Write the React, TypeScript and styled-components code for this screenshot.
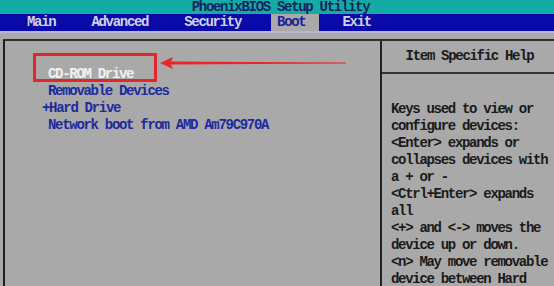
import styled, { createGlobalStyle } from "styled-components";

const GlobalStyle = createGlobalStyle`
  *, *::before, *::after {
    box-sizing: border-box;
  }
  html, body {
    margin: 0;
    padding: 0;
    overflow: hidden;
    background: #a9a9a9;
  }
  body {
    font-family: "Liberation Mono", "DejaVu Sans Mono", monospace;
    font-size: 14px;
    font-weight: 700;
    letter-spacing: -1.3px;
  }
`;

const Screen = styled.div`
  position: relative;
  width: 554px;
  height: 286px;
  overflow: hidden;
  background: #a9a9a9;
  display: flex;
  flex-direction: column;
`;

const TitleBar = styled.div`
  height: 14px;
  line-height: 14px;
  background: #14aba6;
  color: #14235e;
  text-align: center;
  padding-left: 7px;
  white-space: pre;
`;

const MenuBar = styled.div`
  display: flex;
  height: 19px;
  background: #0a0aa8;
  border-bottom: 2px solid #b4b8cc;
`;

const MenuItem = styled.div<{ $left: number; $active?: boolean }>`
  margin-left: ${(p) => p.$left}px;
  padding: 0 ${(p) => (p.$active ? "14px 0 6px" : "6px")};
  line-height: 17px;
  color: ${(p) => (p.$active ? "#1a2496" : "#cfd2e6")};
  background: ${(p) => (p.$active ? "#a9a9a9" : "transparent")};
`;

const Body = styled.div`
  flex: 1;
  min-height: 0;
  padding: 6px 0 0 3px;
  overflow: hidden;
`;

const Frame = styled.div`
  height: 260px;
  width: 551px;
  border-top: 2px solid #2e2e2e;
  border-left: 2px solid #1e1e1e;
  display: grid;
  grid-template-columns: 377px minmax(0, 1fr);
`;

const BootList = styled.div`
  padding: 25px 0 0 43px;
  border-right: 2px solid #222;
`;

const BootItem = styled.div<{ $selected?: boolean; $indent?: number }>`
  line-height: 17px;
  height: 17px;
  white-space: pre;
  margin-left: ${(p) => p.$indent ?? 0}px;
  color: ${(p) => (p.$selected ? "#f2f2f2" : "#1c2a9e")};
`;

const HelpPanel = styled.div`
  display: flex;
  flex-direction: column;
  overflow: hidden;
`;

const HelpHeader = styled.div`
  height: 33px;
  line-height: 31px;
  text-align: center;
  padding-left: 3px;
  color: #1a1a1a;
  border-bottom: 2px solid #333;
`;

const HelpText = styled.div`
  padding: 27px 0 0 9px;
  color: #1a1a1a;
`;

const HelpLine = styled.div`
  height: 17px;
  line-height: 17px;
  white-space: pre;
`;

const Callout = styled.div`
  position: absolute;
  left: 33px;
  top: 53px;
  width: 124px;
  height: 29px;
  border: 3px solid #e2262a;
`;

const Arrow = styled.svg`
  position: absolute;
  left: 158px;
  top: 56px;
`;

const helpLines = [
  "Keys used to view or",
  "configure devices:",
  "<Enter> expands or",
  "collapses devices with",
  "a + or -",
  "<Ctrl+Enter> expands",
  "all",
  "<+> and <-> moves the",
  "device up or down.",
  "<n> May move removable",
  "device between Hard",
];

export default function App() {
  return (
    <Screen>
      <GlobalStyle />
      <TitleBar>PhoenixBIOS Setup Utility</TitleBar>
      <MenuBar>
        <MenuItem $left={21}>Main</MenuItem>
        <MenuItem $left={24}>Advanced</MenuItem>
        <MenuItem $left={24}>Security</MenuItem>
        <MenuItem $left={24} $active>
          Boot
        </MenuItem>
        <MenuItem $left={17}>Exit</MenuItem>
      </MenuBar>
      <Body>
        <Frame>
          <BootList>
            <BootItem $selected>CD-ROM Drive</BootItem>
            <BootItem>Removable Devices</BootItem>
            <BootItem $indent={-6}>+Hard Drive</BootItem>
            <BootItem>Network boot from AMD Am79C970A</BootItem>
          </BootList>
          <HelpPanel>
            <HelpHeader>Item Specific Help</HelpHeader>
            <HelpText>
              {helpLines.map((line) => (
                <HelpLine key={line}>{line}</HelpLine>
              ))}
            </HelpText>
          </HelpPanel>
        </Frame>
      </Body>
      <Callout />
      <Arrow width="190" height="14" viewBox="0 0 190 14">
        <polygon points="2,7 15,1 13,5.5 188,6.6 188,7.4 13,8.5 15,13" fill="#e8262b" />
      </Arrow>
    </Screen>
  );
}
